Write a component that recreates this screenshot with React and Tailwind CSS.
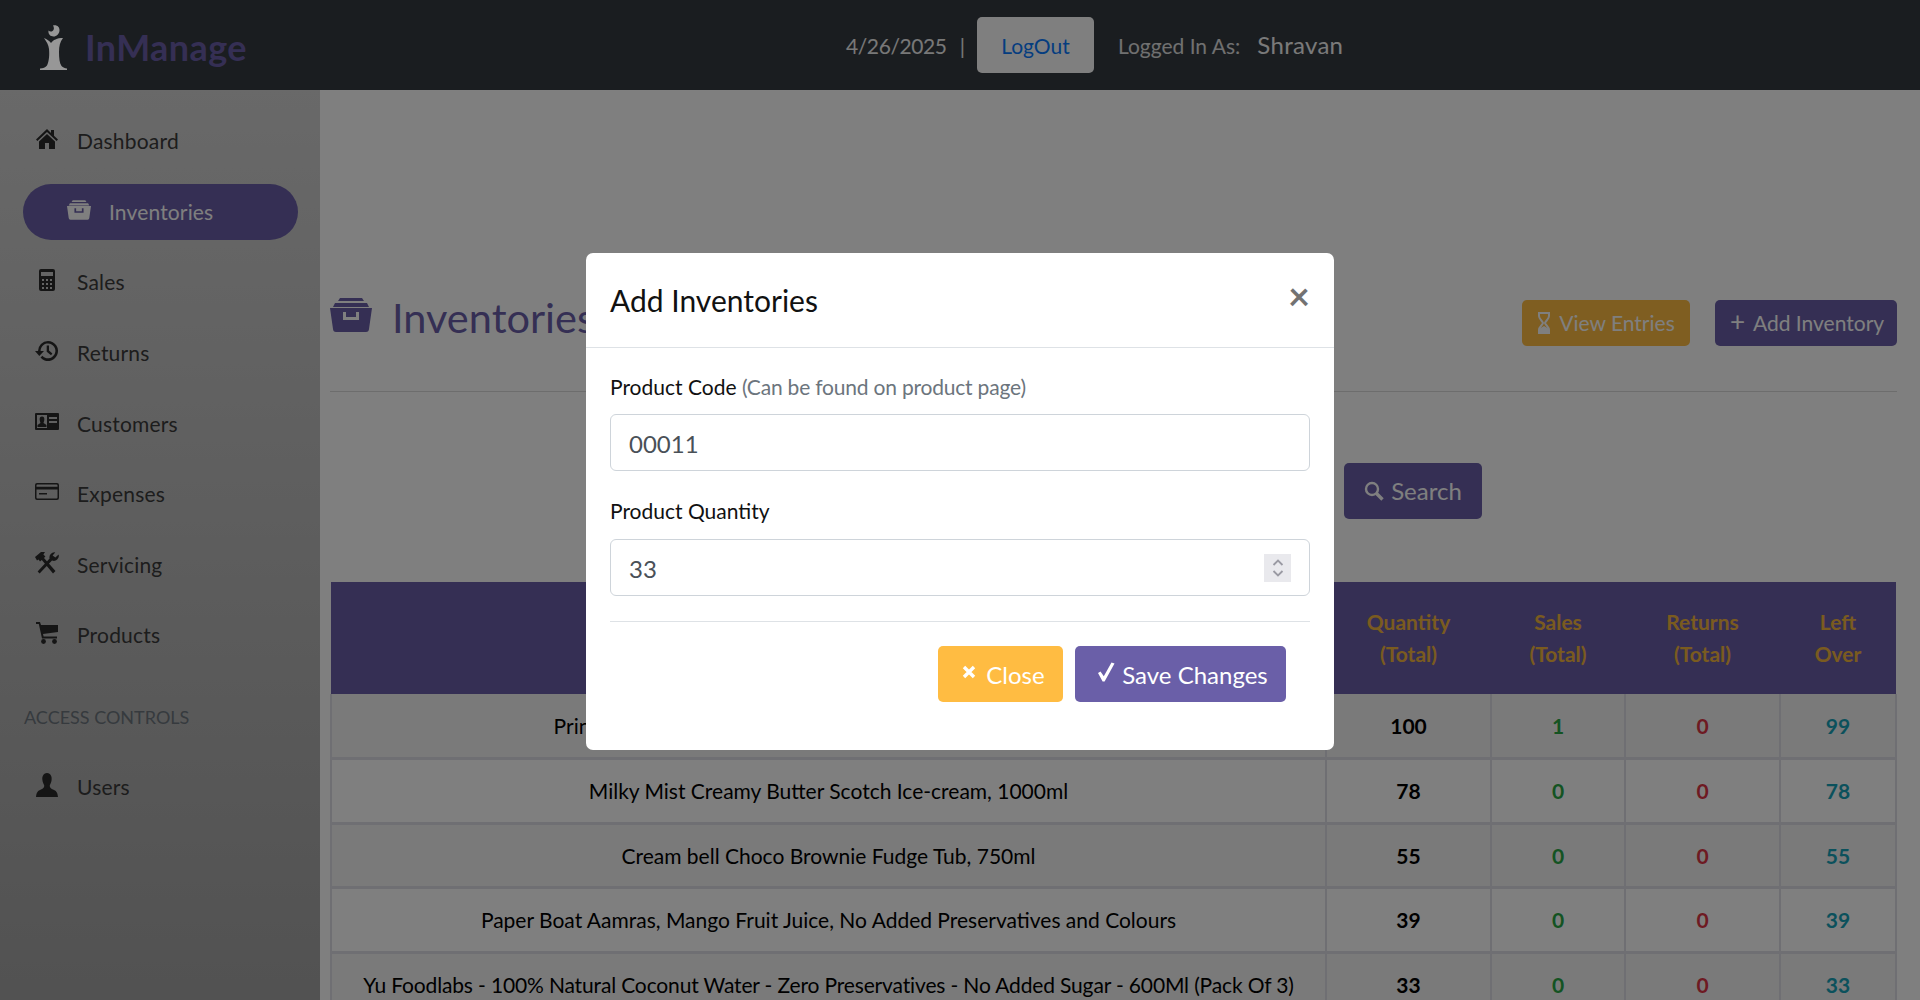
const LATO = "font-['Lato',sans-serif]";

function HomeIcon() {
    return (
        <svg viewBox="0 0 24 24" className="w-[24px] h-[24px]" fill="currentColor">
            <path d="M12 2 L1 12.5 L2.4 14 L12 5 L21.6 14 L23 12.5 L19 8.7 L19 3 L16 3 L16 5.9 Z" />
            <path d="M12 7 L4 14.5 L4 22 L10 22 L10 16 L14 16 L14 22 L20 22 L20 14.5 Z" />
        </svg>
    );
}

function InboxIcon({ className }) {
    return (
        <svg viewBox="0 0 42 34" className={className} fill="currentColor">
            <path d="M10 0 H32 L34 3 H8 Z" />
            <path d="M5 5 H37 L39 9 H3 Z" />
            <path fillRule="evenodd" d="M0 10 H42 L39 31 Q38.8 34 36 34 H6 Q3.2 34 3 31 Z M13 14 V22 H29 V14 H26 V19 H16 V14 Z" />
        </svg>
    );
}

function CalculatorIcon() {
    return (
        <svg viewBox="0 0 16 22" className="w-[16px] h-[22px]" fill="currentColor">
            <path fillRule="evenodd" d="M2 0 H14 Q16 0 16 2 V20 Q16 22 14 22 H2 Q0 22 0 20 V2 Q0 0 2 0 Z M2 3 V7 H14 V3 Z M3 10 V12 H5 V10 Z M7 10 V12 H9 V10 Z M11 10 V12 H13 V10 Z M3 14 V16 H5 V14 Z M7 14 V16 H9 V14 Z M11 14 V16 H13 V14 Z M3 18 V20 H5 V18 Z M7 18 V20 H9 V18 Z M11 18 V20 H13 V18 Z" />
        </svg>
    );
}

function HistoryIcon() {
    return (
        <svg viewBox="0 0 24 24" className="w-[24px] h-[24px]" fill="currentColor">
            <path d="M13 2 A10 10 0 1 1 5.5 18.6 L7.4 16.7 A7.4 7.4 0 1 0 5.6 12 L9 12 L4.3 17 L0 12 L3 12 A10 10 0 0 1 13 2 Z" />
            <path d="M11.7 6.5 H14 V11.6 L17.4 14.4 L16 16.2 L11.7 12.7 Z" />
        </svg>
    );
}

function IdCardIcon() {
    return (
        <svg viewBox="0 0 24 17" className="w-[24px] h-[17px]" fill="currentColor">
            <path fillRule="evenodd" d="M1 0 H23 Q24 0 24 1 V16 Q24 17 23 17 H1 Q0 17 0 16 V1 Q0 0 1 0 Z M2 2 V15 H12 V2 Z M14 4 V6 H22 V4 Z M14 8 V10 H22 V8 Z" />
            <path d="M7 3.5 C9 3.5 9.6 5.2 9.3 7 C9.1 8.4 8.6 9 8.6 10 L11.5 12 V14 H2.5 V12 L5.4 10 C5.4 9 4.9 8.4 4.7 7 C4.4 5.2 5 3.5 7 3.5 Z" />
        </svg>
    );
}

function CardIcon() {
    return (
        <svg viewBox="0 0 24 17" className="w-[24px] h-[17px]" fill="currentColor">
            <path fillRule="evenodd" d="M2 0 H22 Q24 0 24 2 V15 Q24 17 22 17 H2 Q0 17 0 15 V2 Q0 0 2 0 Z M1.5 6.5 V14.5 Q1.5 15.5 2.5 15.5 H21.5 Q22.5 15.5 22.5 14.5 V6.5 Z M1.5 2.5 V3.8 H22.5 V2.5 Q22.5 1.5 21.5 1.5 H2.5 Q1.5 1.5 1.5 2.5 Z M4 10 H12 V11.5 H4 Z" />
        </svg>
    );
}

function ToolsIcon() {
    return (
        <svg viewBox="0 0 24 22" className="w-[24px] h-[22px]" fill="currentColor">
            <path d="M0 5 L6 0 H10 L8.4 2.4 L10.4 4.4 L9 6 L20.5 19 L18 21.4 L6.8 8 L5 9.5 L3.6 7.4 L2 8.6 Z" />
            <path d="M23.6 2.5 A5 5 0 0 1 17 8.6 L4.6 21.6 L2.6 19.6 L14.6 6.6 A5 5 0 0 1 20.2 0.4 L17.6 3.4 L20.4 5.6 Z" />
        </svg>
    );
}

function CartIcon() {
    return (
        <svg viewBox="0 0 22 22" className="w-[22px] h-[22px]" fill="currentColor">
            <path d="M0 0 H4 L5 3 H22 V10 L7 12 L7.6 14.5 H21 V16.5 H6 L2.8 2 H0 Z" />
            <circle cx="7.5" cy="19.5" r="2.4" />
            <circle cx="18.5" cy="19.5" r="2.4" />
        </svg>
    );
}

function UserIcon() {
    return (
        <svg viewBox="0 0 22 24" className="w-[22px] h-[24px]" fill="currentColor">
            <path d="M11 0 C15 0.5 16 3.5 15.6 7 C15.3 9.6 14.4 11 13.8 12.2 C13.6 14.4 14.6 15.4 17 16.4 C20 17.6 21.6 19 22 24 H0 C0.4 19 2 17.6 5 16.4 C7.4 15.4 8.4 14.4 8.2 12.2 C7.6 11 6.7 9.6 6.4 7 C6 3.5 7 0.5 11 0 Z" />
        </svg>
    );
}

function HourglassIcon() {
    return (
        <svg viewBox="0 0 14 22" className="w-[14px] h-[22px]" fill="none" stroke="currentColor" strokeWidth="2">
            <path d="M2 1 H12 V4 C12 7 8.5 9 8 11 C8.5 13 12 15 12 18 V21 H2 V18 C2 15 5.5 13 6 11 C5.5 9 2 7 2 4 Z" />
            <path d="M2 17 L7 14 L12 17 V21 H2 Z" fill="currentColor" stroke="none" />
        </svg>
    );
}

function SearchIcon() {
    return (
        <svg viewBox="0 0 20 20" className="w-[20px] h-[20px]" fill="none" stroke="currentColor">
            <circle cx="8" cy="8" r="6" strokeWidth="2.4" />
            <path d="M12.5 12.5 L18.5 18.5" strokeWidth="3.4" />
        </svg>
    );
}

function CloseIcon() {
    return (
        <svg viewBox="0 0 14 14" className="w-[14px] h-[14px]" fill="none" stroke="currentColor" strokeWidth="3.4">
            <path d="M2 2 L12 12 M12 2 L2 12" />
        </svg>
    );
}

function CheckIcon() {
    return (
        <svg viewBox="0 0 18 20" className="w-[18px] h-[20px]" fill="currentColor">
            <path d="M1 11 L3.5 9.5 L6.8 14.2 L14.5 0.5 L17.5 1.5 L7.6 19.5 H5.6 Z" />
        </svg>
    );
}

function Logo() {
    return (
        <svg viewBox="0 0 27 45" className="w-[27px] h-[45px] relative z-60 text-[#979797]" fill="currentColor">
            <path fillRule="evenodd" d="M13 0.5 C17 -0.5 19.5 2 19.5 5 C19.5 9 16.5 11.5 13.5 11.5 C10 11.5 8 9 8.5 5.5 C9.5 6.5 11 7 12.5 6 C14.5 4.5 14 2 13 0.5 Z" />
            <path d="M4 13 C7 14.5 9.5 15.5 11 18 C13 15 17 13 23 13 C20 17 19 21 19 27 C19 33 19.5 38 21.5 41 C23 42.7 25 43.2 27 43.6 V45 H0 V43.6 C3 43.2 5.5 42.5 7 40.5 C9.3 36 9.5 29 9 24 C8.6 20 6.5 16.5 4 13 Z" />
        </svg>
    );
}

const navItems = [
    { label: "Dashboard", icon: <HomeIcon /> },
    { label: "Inventories", active: true },
    { label: "Sales", icon: <CalculatorIcon /> },
    { label: "Returns", icon: <HistoryIcon /> },
    { label: "Customers", icon: <IdCardIcon /> },
    { label: "Expenses", icon: <CardIcon /> },
    { label: "Servicing", icon: <ToolsIcon /> },
    { label: "Products", icon: <CartIcon /> },
];

const rows = [
    ["Pringles Original Flavour Potato Crisps Chips, 134g Tin Pack", 100, 1, 0, 99],
    ["Milky Mist Creamy Butter Scotch Ice-cream, 1000ml", 78, 0, 0, 78],
    ["Cream bell Choco Brownie Fudge Tub, 750ml", 55, 0, 0, 55],
    ["Paper Boat Aamras, Mango Fruit Juice, No Added Preservatives and Colours", 39, 0, 0, 39],
    ["Yu Foodlabs - 100% Natural Coconut Water - Zero Preservatives - No Added Sugar - 600Ml (Pack Of 3)", 33, 0, 0, 33],
];

function NavRow({ item }) {
    if (item.active) {
        return (
            <div className="flex items-center h-[56px] w-[275px] ml-[23px] pl-[44px] rounded-full bg-[#6a5fa8] text-white">
                <InboxIcon className="w-[24px] h-[20px] -mt-[4px]" />
                <span className="ml-[18px] tracking-[0.15px]">{item.label}</span>
            </div>
        );
    }
    return (
        <div className="flex items-center h-[56px] pl-[34px] text-[#3a3a3a]">
            <span className="w-[26px] h-[24px] flex items-center justify-center -mt-[4px] text-[#2b2b2b]">{item.icon}</span>
            <span className="ml-[17px] tracking-[0.2px]">{item.label}</span>
        </div>
    );
}

function Sidebar() {
    return (
        <aside className="w-[320px] shrink-0 bg-gradient-to-b from-[#d2d2d2] to-[#a4a4a4] text-[21px] pt-[23px]">
            <div className="flex flex-col gap-[14.6px]">
                {navItems.map((item) => (
                    <NavRow key={item.label} item={item} />
                ))}
            </div>
            <div className="pl-[24px] mt-[41px] mb-[28px] text-[18px] leading-[27px] text-[#6c757d]">ACCESS CONTROLS</div>
            <NavRow item={{ label: "Users", icon: <UserIcon /> }} />
        </aside>
    );
}

function InventoryTable() {
    return (
        <table className="w-[1565px] table-fixed border-collapse text-[21px] text-center text-black">
            <colgroup>
                <col className="w-[995px]" />
                <col className="w-[165px]" />
                <col className="w-[134px]" />
                <col className="w-[155px]" />
                <col className="w-[116px]" />
            </colgroup>
            <thead>
                <tr className="h-[112px] bg-[#6a5fa8] text-[#f5b63f] font-bold leading-[32px]">
                    <th></th>
                    <th>Quantity<br />(Total)</th>
                    <th>Sales<br />(Total)</th>
                    <th>Returns<br />(Total)</th>
                    <th>Left<br />Over</th>
                </tr>
            </thead>
            <tbody>
                {rows.map((r, i) => (
                    <tr key={r[0]} className={`h-[64.6px] ${i % 2 === 0 ? "bg-[#f4f4f4]" : "bg-white"}`}>
                        <td className={`border-x-2 border-b-[3px] border-[#dfdfe6] whitespace-nowrap ${i === 4 ? "tracking-[-0.15px]" : ""}`}>{r[0]}</td>
                        <td className="border-x-2 border-b-[3px] border-[#dfdfe6] font-bold">{r[1]}</td>
                        <td className="border-x-2 border-b-[3px] border-[#dfdfe6] font-bold text-[#28a745]">{r[2]}</td>
                        <td className="border-x-2 border-b-[3px] border-[#dfdfe6] font-bold text-[#dc3545]">{r[3]}</td>
                        <td className="border-x-2 border-b-[3px] border-[#dfdfe6] font-bold text-[#17a2b8]">{r[4]}</td>
                    </tr>
                ))}
            </tbody>
        </table>
    );
}

function AddInventoryModal() {
    return (
        <div className="fixed inset-0 z-50 bg-black/50 flex justify-center items-start pt-[253px]">
            <div className="w-[748px] h-[497px] bg-white rounded-[7px] text-[21px] text-[#111]">
                <div className="h-[95px] px-[24px] flex items-center justify-between border-b border-[#dee2e6]">
                    <h5 className="text-[30px] leading-[45px]">Add Inventories</h5>
                    <span className="text-[38px] leading-none font-bold text-black opacity-55 -mt-[10px]">×</span>
                </div>
                <div className="px-[24px] pt-[23px]">
                    <label className="block leading-[32px] mb-[11px]">
                        Product Code <span className="text-[#6c757d] tracking-[-0.2px]">(Can be found on product page)</span>
                    </label>
                    <input
                        readOnly
                        value="00011"
                        className="block w-full h-[57px] px-[18px] pt-[2px] border border-[#ced4da] rounded-[6px] text-[24px] text-[#495057] outline-none"
                    />
                    <label className="block leading-[32px] mt-[24px] mb-[12px]">Product Quantity</label>
                    <div className="flex items-center w-full h-[57px] pl-[18px] pr-[18px] border border-[#ced4da] rounded-[6px] text-[24px] text-[#495057]">
                        <span className="flex-1 pt-[2px]">33</span>
                        <span className="w-[27px] h-[28px] bg-[#e9e9ed] flex items-center justify-center">
                            <svg viewBox="0 0 14 20" className="w-[14px] h-[20px]" fill="none" stroke="#9a9aa3" strokeWidth="1.8">
                                <path d="M2.5 7 L7 2.5 L11.5 7" />
                                <path d="M2.5 13 L7 17.5 L11.5 13" />
                            </svg>
                        </span>
                    </div>
                    <hr className="mt-[25px] border-[#dee2e6]" />
                    <div className="flex justify-end gap-[12px] pr-[24px] mt-[24px]">
                        <button className="h-[56px] w-[125px] pl-[6px] pt-[2px] rounded-[5px] bg-[#ffbc42] text-white text-[24px] flex items-center justify-center">
                            <span className="mr-[10px] -mt-[6px]"><CloseIcon /></span>
                            Close
                        </button>
                        <button className="h-[56px] w-[211px] pl-[4px] pt-[2px] rounded-[5px] bg-[#6a5fa8] text-white text-[24px] flex items-center justify-center">
                            <span className="mr-[7px] -mt-[6px]"><CheckIcon /></span>
                            Save Changes
                        </button>
                    </div>
                </div>
            </div>
        </div>
    );
}

export default function App() {
    return (
        <div className={`h-screen overflow-hidden bg-white flex flex-col ${LATO}`}>
            {/* Navbar */}
            <header className="h-[90px] shrink-0 bg-[#343a40] flex items-center relative">
                <div className="flex items-center pl-[40px] mt-[4px] w-[846px]">
                    <Logo />
                    <span className="ml-[18px] text-[36px] font-bold text-[#6a5fa8] tracking-[0.4px]">InManage</span>
                </div>
                <span className="mt-[2px] text-[21px] text-[#f0f0f0] tracking-[-0.4px]">4/26/2025</span>
                <span className="mt-[2px] text-[21px] text-[#f0f0f0] ml-[13px]">|</span>
                <button className="ml-[12px] pt-[2px] w-[117px] h-[56px] rounded-[5px] bg-white text-[21px] text-[#0a7bff]">LogOut</button>
                <span className="mt-[2px] ml-[24px] text-[21px] text-[#e0e0e0]">Logged In As:</span>
                <span className="ml-[17px] text-[24px] text-[#f5f5f5] tracking-[0.3px]">Shravan</span>
            </header>

            <div className="flex flex-1 min-h-0">
                <Sidebar />
                <main className="flex-1 pl-[10px] pr-[25px]">
                    <div className="flex items-start justify-between pt-[210px] pb-[44px] border-b border-[#dadada]">
                        <div className="flex items-center text-[#6a5fa8] -mt-[13px]">
                            <InboxIcon className="w-[42px] h-[34px] -mt-[4px]" />
                            <h1 className="ml-[20px] text-[41.5px] leading-[60px]">Inventories</h1>
                        </div>
                        <div className="flex gap-[25px] text-[21px] text-white">
                            <button className="h-[46px] w-[168px] rounded-[5px] bg-[#ffbc42] flex items-center justify-center gap-[8px]">
                                <HourglassIcon />
                                View Entries
                            </button>
                            <button className="h-[46px] w-[182px] pl-[2px] rounded-[5px] bg-[#6a5fa8] flex items-center justify-center gap-[8px]">
                                <span className="text-[26px] leading-none -mt-[4px]">+</span>
                                Add Inventory
                            </button>
                        </div>
                    </div>
                    <div className="flex justify-end pt-[71px] pb-[63px] pr-[415px]">
                        <button className="h-[56px] w-[138px] rounded-[5px] bg-[#6a5fa8] text-white text-[24px] flex items-center justify-center gap-[7px]">
                            <SearchIcon />
                            Search
                        </button>
                    </div>
                    <InventoryTable />
                </main>
            </div>

            <AddInventoryModal />
        </div>
    );
}
